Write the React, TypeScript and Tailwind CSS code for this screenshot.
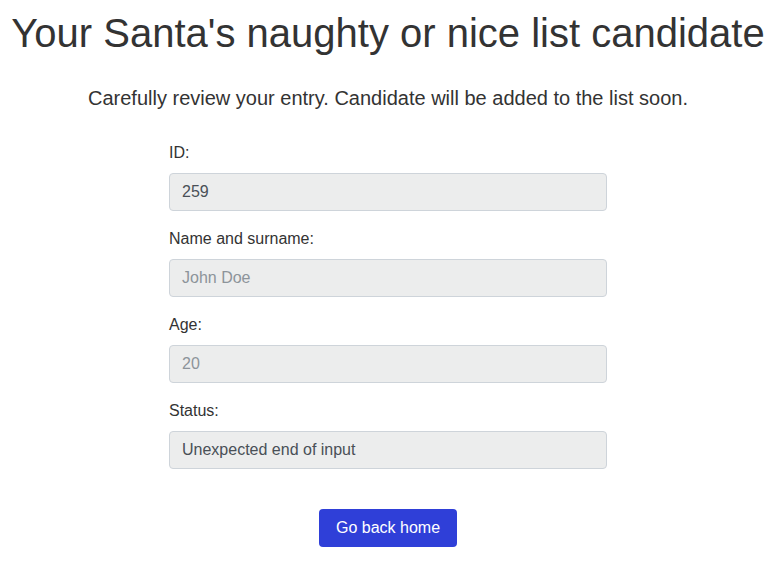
import React from "react";

function Field({ label, value, muted }: { label: string; value: string; muted?: boolean }) {
  return (
    <div className="mb-4">
      <div className="mb-2 text-[16px] leading-6 text-[#333]">{label}</div>
      <div
        className={`flex h-[38px] items-center rounded-[4px] border border-[#ced4da] bg-[#eceded] px-3 text-[16px] ${
          muted ? "text-[#8d949a]" : "text-[#495057]"
        }`}
      >
        {value}
      </div>
    </div>
  );
}

export default function App() {
  return (
    <div
      className="w-[776px] bg-white text-[#333]"
      style={{ fontFamily: '"Liberation Sans", Arial, sans-serif' }}
    >
      <h1 className="pt-[9px] text-center text-[40px] leading-[48px] text-[#333]">
        Your Santa's naughty or nice list candidate
      </h1>
      <p className="mt-[26px] text-center text-[20px] leading-[30px] text-[#333]">
        Carefully review your entry. Candidate will be added to the list soon.
      </p>
      <div className="mx-auto mt-[28px] w-[438px]">
        <Field label="ID:" value="259" />
        <Field label="Name and surname:" value="John Doe" muted />
        <Field label="Age:" value="20" muted />
        <Field label="Status:" value="Unexpected end of input" />
        <div className="mt-10 flex justify-center">
          <button className="h-[38px] rounded-[4px] bg-[#2f3fd8] px-[17px] text-[16px] text-white">
            Go back home
          </button>
        </div>
      </div>
    </div>
  );
}
